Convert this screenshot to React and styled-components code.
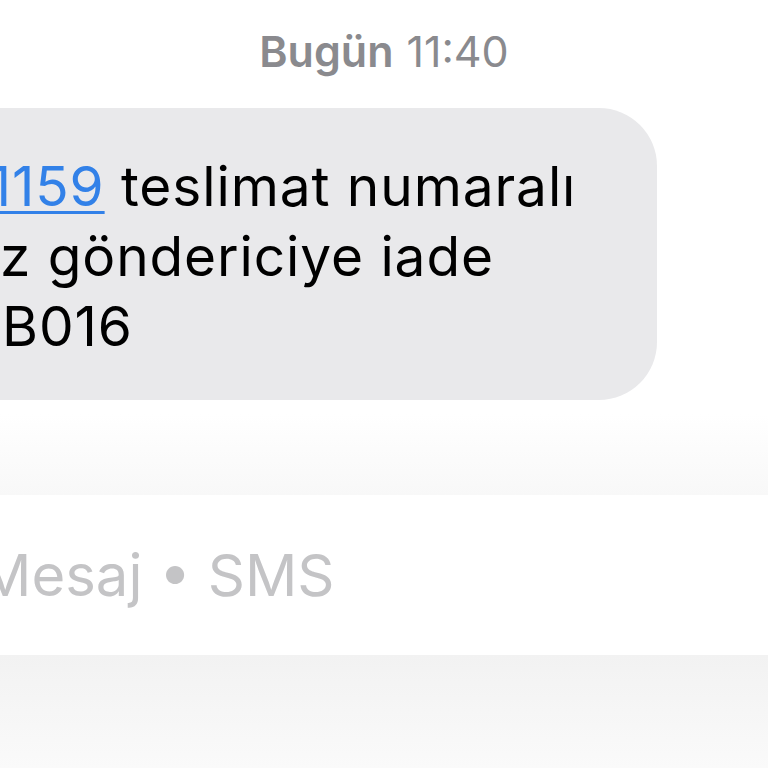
import React from "react";
import styled, { createGlobalStyle } from "styled-components";

const Global = createGlobalStyle`
  html, body { margin: 0; padding: 0; background: #ffffff; }
  body { width: 768px; height: 768px; overflow: hidden; font-family: Inter, "Noto Sans", sans-serif; -webkit-font-smoothing: antialiased; }
`;

const Screen = styled.div`
  width: 768px;
  height: 768px;
  display: flex;
  flex-direction: column;
  overflow: hidden;
  background: #ffffff;
`;

const Stamp = styled.div`
  height: 108px;
  display: flex;
  align-items: flex-start;
  justify-content: center;
  padding-top: 25px;
  box-sizing: border-box;
  font-size: 43px;
  line-height: 52px;
  color: #8a8a8e;
  white-space: nowrap;
  b { font-weight: 600; margin-right: 13px; }
  span { font-weight: 400; }
`;

const Bubble = styled.div`
  margin-left: -440px;
  width: 1097px;
  height: 292px;
  flex: 0 0 auto;
  box-sizing: border-box;
  background: #e9e9eb;
  border-radius: 58px;
  padding-top: 43px;
  display: flex;
  flex-direction: column;
  font-size: 55px;
  line-height: 70px;
  letter-spacing: 0.9px;
  color: #000000;
  white-space: nowrap;
`;

const Line = styled.div`
  display: flex;
`;

const Hidden = styled.div`
  flex: 0 0 ${(p) => p.$w}px;
  display: flex;
  justify-content: flex-end;
  overflow: hidden;
`;

const Link = styled.span`
  color: #3281e8;
  text-decoration: underline;
  text-decoration-thickness: 3px;
  text-underline-offset: 5px;
`;

const Fade = styled.div`
  height: 95px;
  flex: 0 0 auto;
  background: linear-gradient(#ffffff 15%, #f8f8f8);
`;

const Composer = styled.div`
  height: 160px;
  flex: 0 0 auto;
  display: flex;
  align-items: center;
  overflow: hidden;
  background: #ffffff;
`;

const Placeholder = styled.div`
  margin-left: -21px;
  font-size: 58px;
  color: #c4c4c6;
  white-space: nowrap;
`;

const Keyboard = styled.div`
  flex: 1;
  background: linear-gradient(#f2f2f2, #fafafa);
`;

export default function App() {
  return (
    <Screen>
      <Global />
      <Stamp>
        <b>Bugün</b>
        <span>11:40</span>
      </Stamp>
      <Bubble>
        <Line>
          <Hidden $w={452}>
            <Link>Sayın müşterimiz, 7300001</Link>
          </Hidden>
          <Link>159</Link>
          <span>&nbsp;teslimat numaralı</span>
        </Line>
        <Line>
          <Hidden $w={440}>gönderini</Hidden>
          <span>z göndericiye iade</span>
        </Line>
        <Line>
          <Hidden $w={442}>edilmiştir. Kod:&nbsp;</Hidden>
          <span>B016</span>
        </Line>
      </Bubble>
      <Fade />
      <Composer>
        <Placeholder>Mesaj • SMS</Placeholder>
      </Composer>
      <Keyboard />
    </Screen>
  );
}
